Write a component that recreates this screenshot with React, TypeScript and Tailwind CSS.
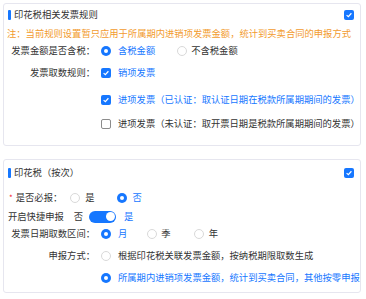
import React from "react";

const BLUE = "#1677ff";

function Check({ on }: { on: boolean }) {
  return on ? (
    <span className="w-[10px] h-[10px] rounded-[2px] bg-[#1677ff] flex items-center justify-center shrink-0">
      <svg viewBox="0 0 10 10" className="w-[8px] h-[8px]">
        <path d="M2 5.2 L4.2 7.2 L8 2.8" fill="none" stroke="#fff" strokeWidth="1.5" />
      </svg>
    </span>
  ) : (
    <span className="block w-[10px] h-[10px] rounded-[2px] border border-[#8c8c8c] bg-white shrink-0" />
  );
}

function Radio({ on }: { on: boolean }) {
  return on ? (
    <span className="w-[10px] h-[10px] rounded-full bg-[#1677ff] flex items-center justify-center shrink-0">
      <span className="block w-[4px] h-[4px] rounded-full bg-white" />
    </span>
  ) : (
    <span className="block w-[10px] h-[10px] rounded-full border border-[#d9d9d9] bg-white shrink-0" />
  );
}

function Title({ text }: { text: string }) {
  return (
    <div className="flex items-center justify-between pr-[6px]">
      <div className="flex items-center">
        <span className="ml-[4px] w-[3px] h-[10px] bg-[#1677ff] rounded-[1px]" />
        <span className="ml-[3px] text-[#333]">{text}</span>
      </div>
      <Check on />
    </div>
  );
}

function Label({ text }: { text: string }) {
  return <span className="w-[91px] text-right text-[#333] shrink-0">{text}</span>;
}

export default function App() {
  return (
    <div className="w-[366px] h-[299px] bg-white pt-[3px] font-['Noto_Sans_CJK_SC',sans-serif] text-[9.3px] leading-none">
      {/* 发票规则 */}
      <div className="ml-[3px] w-[358px] border border-[#e6e6ef] rounded-[3px] pb-[11px]">
        <div className="h-[22px] flex flex-col justify-center">
          <Title text="印花税相关发票规则" />
        </div>
        <div className="h-[16px] flex items-center pl-[3px] text-[#f29b2e]">
          注：当前规则设置暂只应用于所属期内进销项发票金额，统计到买卖合同的申报方式
        </div>
        <div className="h-[18px] flex items-center">
          <Label text="发票金额是否含税：" />
          <span className="ml-[6px] flex"><Radio on /></span>
          <span className="ml-[7px] text-[#1677ff]">含税金额</span>
          <span className="ml-[22px] flex"><Radio on={false} /></span>
          <span className="ml-[4px] text-[#333]">不含税金额</span>
        </div>
        <div className="h-[26px] flex items-center">
          <Label text="发票取数规则：" />
          <span className="ml-[6px] flex"><Check on /></span>
          <span className="ml-[7px] text-[#1677ff]">销项发票</span>
        </div>
        <div className="h-[28px] flex items-center pl-[97px]">
          <Check on />
          <span className="ml-[7px] text-[#1677ff]">进项发票（已认证：取认证日期在税款所属期期间的发票）</span>
        </div>
        <div className="h-[20px] flex items-center pl-[97px]">
          <Check on={false} />
          <span className="ml-[7px] text-[#333]">进项发票（未认证：取开票日期是税款所属期期间的发票）</span>
        </div>
      </div>

      {/* 按次 */}
      <div className="mt-[13px] ml-[3px] w-[358px] border border-[#e6e6ef] rounded-[3px] pb-[5px]">
        <div className="h-[26px] flex flex-col justify-center">
          <Title text="印花税（按次）" />
        </div>
        <div className="h-[23px] flex items-center">
          <span className="ml-[5px] text-[#f5222d] text-[8px]">*</span>
          <span className="ml-[3px] text-[#333]">是否必报：</span>
          <span className="ml-[8px] flex"><Radio on={false} /></span>
          <span className="ml-[5px] text-[#333]">是</span>
          <span className="ml-[22px] flex"><Radio on /></span>
          <span className="ml-[6px] text-[#1677ff]">否</span>
        </div>
        <div className="h-[15px] flex items-center">
          <span className="ml-[4px] text-[#333]">开启快捷申报</span>
          <span className="ml-[10px] text-[#333]">否</span>
          <span
            className="ml-[6px] w-[27px] h-[12px] rounded-full flex items-center justify-end pr-[1.5px]"
            style={{ backgroundColor: BLUE }}
          >
            <span className="block w-[9px] h-[9px] rounded-full bg-white" />
          </span>
          <span className="ml-[8px] text-[#1677ff]">是</span>
        </div>
        <div className="h-[20px] flex items-center">
          <Label text="发票日期取数区间：" />
          <span className="ml-[6px] flex"><Radio on /></span>
          <span className="ml-[7px] text-[#1677ff]">月</span>
          <span className="ml-[20px] flex"><Radio on={false} /></span>
          <span className="ml-[4px] text-[#333]">季</span>
          <span className="ml-[23px] flex"><Radio on={false} /></span>
          <span className="ml-[5px] text-[#333]">年</span>
        </div>
        <div className="h-[24px] flex items-center">
          <Label text="申报方式：" />
          <span className="ml-[6px] flex"><Radio on={false} /></span>
          <span className="ml-[7px] text-[#333]">根据印花税关联发票金额，按纳税期限取数生成</span>
        </div>
        <div className="h-[19px] flex items-center pl-[97px]">
          <Radio on />
          <span className="ml-[7px] text-[#1677ff]">所属期内进销项发票金额，统计到买卖合同，其他按零申报</span>
        </div>
      </div>
    </div>
  );
}
